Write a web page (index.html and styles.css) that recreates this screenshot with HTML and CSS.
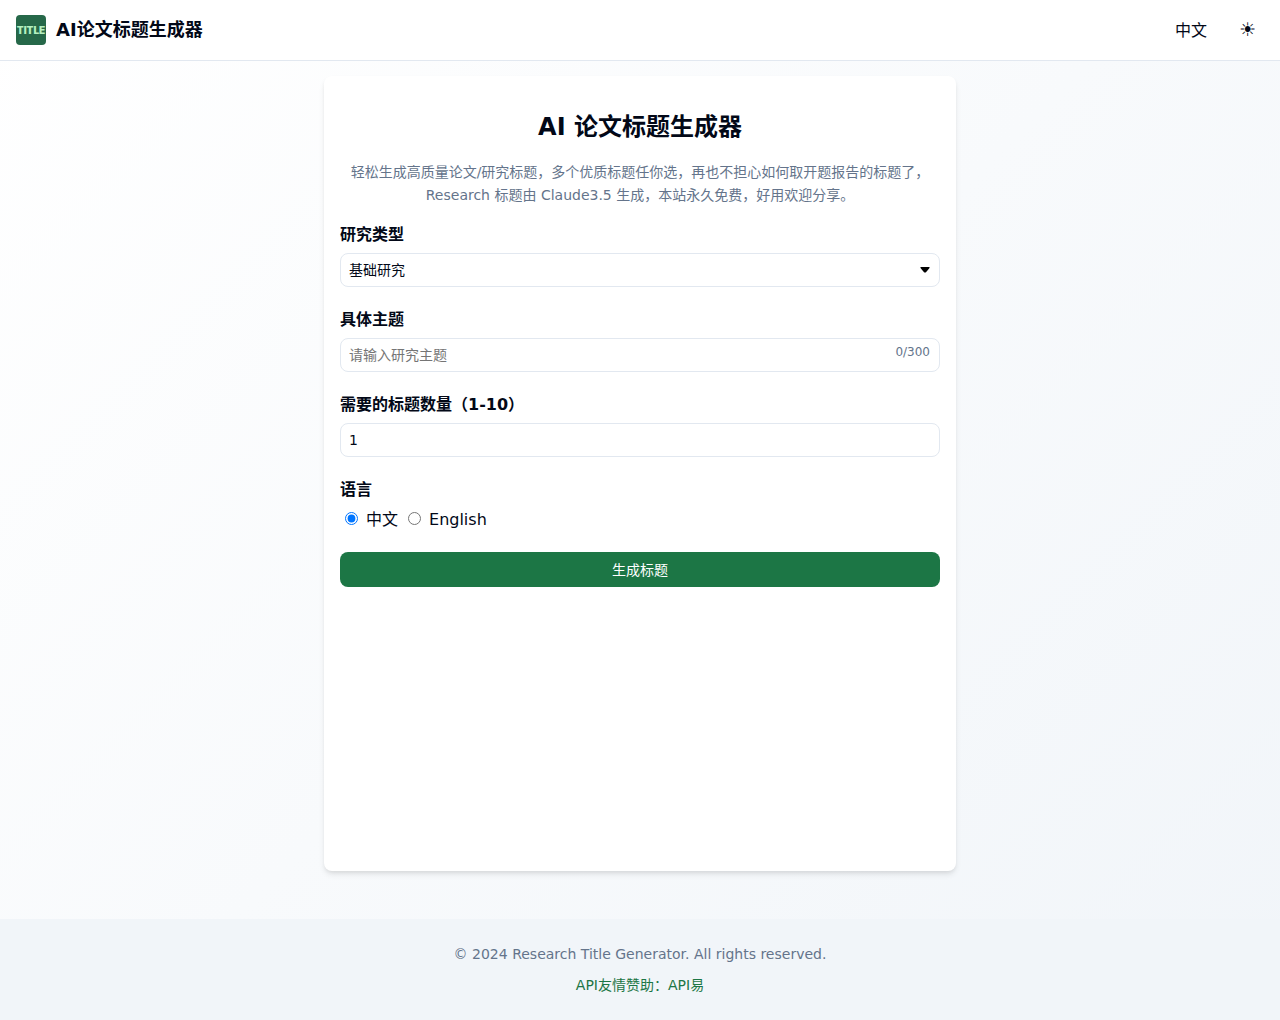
FILE: index.html
```html
<!DOCTYPE html>
<html lang="zh-CN">
<head>
  <meta charset="UTF-8">
  <meta name="viewport" content="width=device-width, initial-scale=1.0">
  <title>AI论文标题生成器</title>
  <link rel="stylesheet" href="styles.css">
</head>
<body>
  <header class="header">
    <a class="brand" href="#">
      <svg class="logo" viewBox="0 0 30 30" aria-hidden="true">
        <rect width="30" height="30" rx="4" fill="#266849"/>
        <text class="logo-text" x="15" y="19" text-anchor="middle">TITLE</text>
      </svg>
      <span>AI论文标题生成器</span>
    </a>
    <div class="header-actions">
      <button type="button" class="header-btn">中文</button>
      <button type="button" class="header-btn theme-btn" aria-label="切换主题">☀</button>
    </div>
  </header>

  <main class="main">
    <div class="card">
      <h1>AI 论文标题生成器</h1>
      <p class="description">轻松生成高质量论文/研究标题，多个优质标题任你选，再也不担心如何取开题报告的标题了，Research 标题由 Claude3.5 生成，本站永久免费，好用欢迎分享。</p>

      <form id="titleForm">
        <div class="field">
          <label for="type">研究类型</label>
          <div class="control">
            <select id="type">
              <option selected>基础研究</option>
              <option>应用研究</option>
            </select>
            <svg class="arrow" viewBox="0 0 10 6" aria-hidden="true"><path d="M1 0h8q1 0 .5 1L6 5.2q-1 .8-2 0L.5 1Q0 0 1 0z"/></svg>
          </div>
        </div>
        <div class="field">
          <label for="topic">具体主题</label>
          <div class="control">
            <input id="topic" type="text" maxlength="300" placeholder="请输入研究主题">
            <span class="counter" id="counter">0/300</span>
          </div>
        </div>
        <div class="field">
          <label for="count">需要的标题数量（1-10）</label>
          <div class="control">
            <input id="count" type="number" min="1" max="10" value="1">
          </div>
        </div>
        <fieldset class="field">
          <legend>语言</legend>
          <div class="radios">
            <input id="langZh" type="radio" name="lang" value="zh" checked>
            <label for="langZh">中文</label>
            <input id="langEn" type="radio" name="lang" value="en">
            <label for="langEn">English</label>
          </div>
        </fieldset>
        <button type="submit" class="submit">生成标题</button>
      </form>
    </div>
  </main>

  <footer class="footer">
    <p>© 2024 Research Title Generator. All rights reserved.</p>
    <p><a href="#">API友情赞助：API易</a></p>
  </footer>

  <script>
    const topic = document.getElementById("topic");
    const counter = document.getElementById("counter");
    topic.addEventListener("input", () => {
      counter.textContent = topic.value.length + "/300";
    });
    document.getElementById("titleForm").addEventListener("submit", e => e.preventDefault());
  </script>
</body>
</html>
```
FILE: styles.css
```css
/* --- Base --- */
* {box-sizing:border-box;margin:0;padding:0}
body{min-height:100vh;display:flex;flex-direction:column;font-family:"DejaVu Sans","Noto Sans CJK SC",sans-serif;font-size:16px;line-height:24px;color:#020817;background:linear-gradient(135deg,#fff,#f1f5f9)}
button,input,select{font:inherit;color:inherit}
button{border:none;background:none;cursor:pointer}
a{color:inherit;text-decoration:none}

/* --- Header --- */
.header{display:flex;justify-content:space-between;align-items:center;padding:0 16px;height:61px;background:#fff;border-bottom:1px solid #e2e8f0}
.brand{display:flex;align-items:center;gap:10px;font-size:18px;font-weight:700}
.logo{width:30px;height:30px}
.logo-text{font-family:Inter,sans-serif;font-size:10px;font-weight:900;fill:#b5f0c0}
.header-actions{display:flex;align-items:baseline;gap:16px}
.header-btn{padding:8px}
.theme-btn{font-size:19px}

/* --- Card --- */
.main{flex:1;display:flex;flex-direction:column;padding:15px 16px 48px}
.card{flex:1;width:100%;max-width:632px;margin:0 auto;padding:32px 16px;background:#fff;border-radius:8px;box-shadow:0 4px 6px -1px rgba(0,0,0,.1),0 2px 4px -1px rgba(0,0,0,.06)}
h1{font-size:24px;line-height:38px;text-align:center;margin-bottom:15px}
.description{font-size:14px;line-height:23px;color:#64748b;text-align:center;margin-bottom:15px}

/* --- Form --- */
.field{border:none;margin-bottom:20px}
.field > label,legend{display:block;line-height:26px;font-weight:700;margin-bottom:5px}
.control{position:relative}
.control input,.control select{display:block;width:100%;height:34px;padding:0 8px;border:1px solid #e2e8f0;border-radius:8px;background:#fff;font-size:14px;appearance:none}
.control input[type="number"]{appearance:textfield}
.arrow{position:absolute;top:14px;right:10px;width:10px;height:6px;fill:#000;pointer-events:none}
.counter{position:absolute;top:6px;right:10px;font-size:12px;line-height:16px;color:#64748b}
.radios{display:flex;align-items:flex-start;padding-left:5px}
.radios input{width:13px;height:13px;margin-top:4px}
.radios label{margin:0 10px 0 8px}
.submit{width:100%;height:35px;border-radius:8px;background:#1c7645;color:#fff;font-size:14px}

/* --- Footer --- */
.footer{padding:24px 16px;background:#f1f5f9;color:#64748b;font-size:14px;line-height:22px;text-align:center}
.footer p + p{margin-top:9px}
.footer a{color:#1c7645}
```
